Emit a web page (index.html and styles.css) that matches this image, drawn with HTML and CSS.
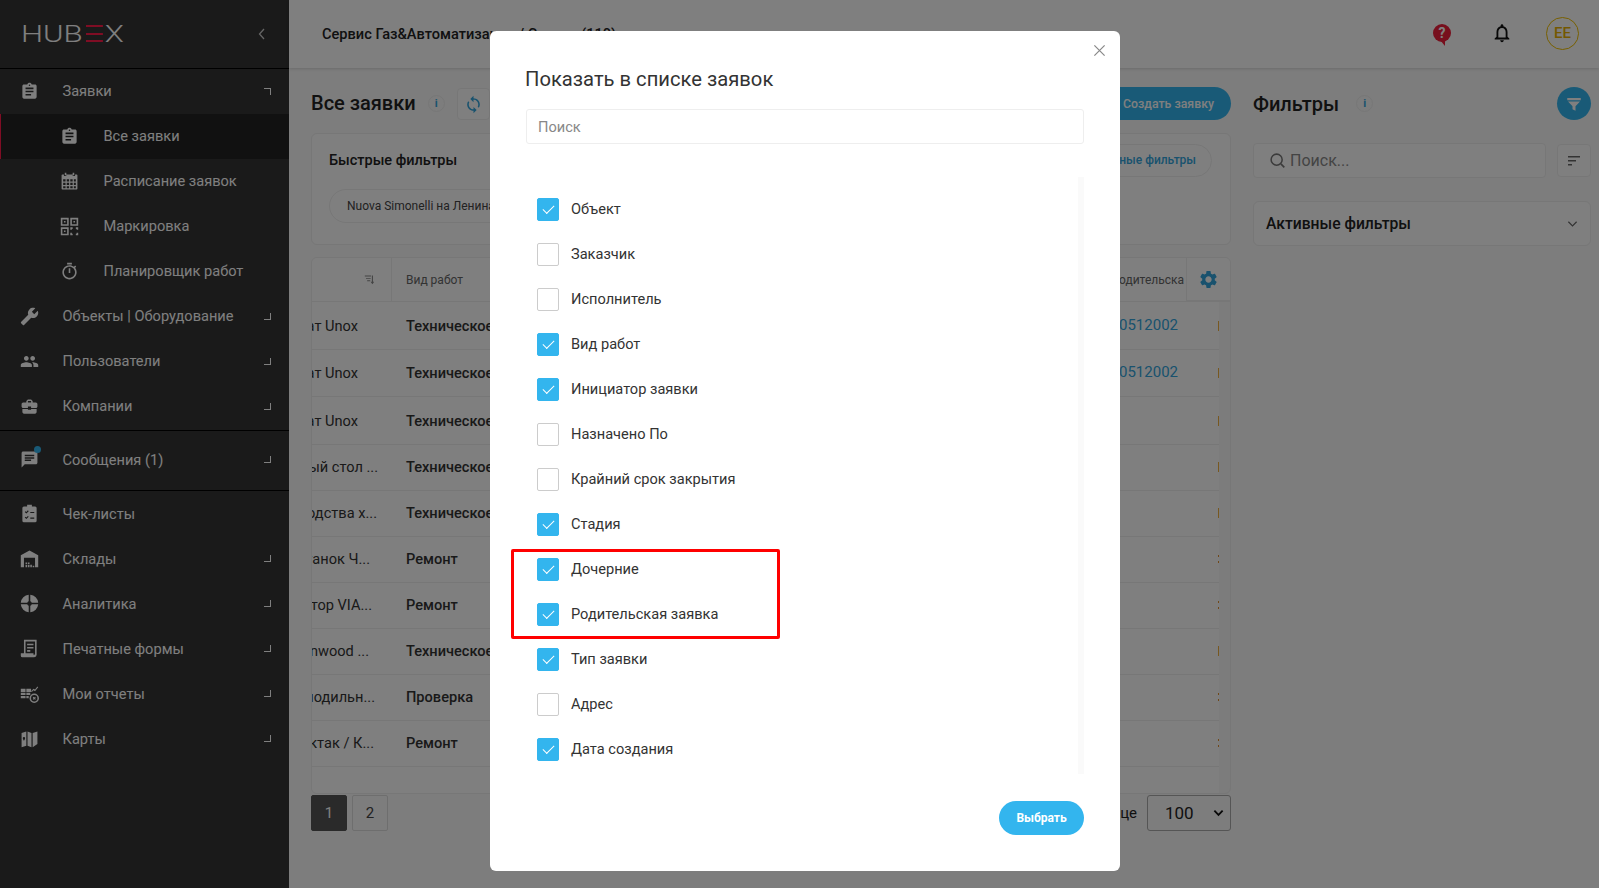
FILE: index.html
```html
<!DOCTYPE html>
<html lang="en">
<head>
  <meta charset="UTF-8">
  <meta name="viewport" content="width=device-width, initial-scale=1.0">
  <title>HubEx</title>
  <link rel="stylesheet" href="styles.css">
</head>
<body>
  <svg class="sprite" xmlns="http://www.w3.org/2000/svg">
    <symbol id="i-assign" viewBox="0 0 24 24"><path d="M19 3h-4.18C14.4 1.84 13.3 1 12 1c-1.3 0-2.4.84-2.82 2H5c-1.1 0-2 .9-2 2v14c0 1.1.9 2 2 2h14c1.1 0 2-.9 2-2V5c0-1.1-.9-2-2-2zm-7 0c.55 0 1 .45 1 1s-.45 1-1 1-1-.45-1-1 .45-1 1-1zm2 14H7v-2h7v2zm3-4H7v-2h10v2zm0-4H7V7h10v2z"/></symbol>
    <symbol id="i-calendar" viewBox="0 0 24 24"><path fill-rule="evenodd" d="M6 1h2v3H6zM16 1h2v3h-2zM3 3h2v2h3V3h8v2h3V3h2a1 1 0 0 1 1 1v17a1 1 0 0 1-1 1H3a1 1 0 0 1-1-1V4a1 1 0 0 1 1-1zm1 6v3h3V9zm4.500 0v3h3V9zm4.500 0v3h3V9zm4.500 0v3H20V9zM4 13.500v3h3v-3zm4.500 0v3h3v-3zm4.500 0v3h3v-3zm4.500 0v3H20v-3zM4 18v2.500h3V18zm4.500 0v2.500h3V18zm4.500 0v2.500h3V18zm4.500 0v2.500H20V18z"/></symbol>
    <symbol id="i-qr" viewBox="0 0 24 24"><path fill-rule="evenodd" d="M1 1h10v10H1zm2 2v6h6V3zm2 2h2v2H5zM13 1h10v10H13zm2 2v6h6V3zm2 2h2v2h-2zM1 13h10v10H1zm2 2v6h6v-6zm2 2h2v2H5zM13 13h3v2h-1v1h-2zM20 13h3v3h-2v-1h-1zM13 20h2v1h1v2h-3zM21 20h2v3h-3v-2h1z"/></symbol>
    <symbol id="i-timer" viewBox="0 0 24 24"><path d="M15 1H9v2h6V1zm-4 13h2V8h-2v6zm8.030-6.610l1.420-1.420c-.43-.51-.9-.99-1.410-1.410l-1.420 1.420C16.070 4.740 14.120 4 12 4c-4.970 0-9 4.030-9 9s4.020 9 9 9 9-4.030 9-9c0-2.120-.74-4.070-1.970-5.610zM12 20c-3.870 0-7-3.130-7-7s3.130-7 7-7 7 3.130 7 7-3.130 7-7 7z"/></symbol>
    <symbol id="i-wrench" viewBox="0 0 24 24"><path transform="translate(24 0) scale(-1 1)" d="M22.700 19l-9.100-9.100c.9-2.300.4-5-1.500-6.900-2-2-5-2.400-7.400-1.300L9 6 6 9 1.600 4.700C.4 7.100.9 10.100 2.900 12.100c1.900 1.900 4.600 2.400 6.900 1.500l9.100 9.100c.4.4 1 .4 1.400 0l2.300-2.300c.5-.4.5-1.100.1-1.400z"/></symbol>
    <symbol id="i-people" viewBox="0 0 24 24"><path d="M16 11c1.660 0 2.990-1.340 2.990-3S17.660 5 16 5c-1.660 0-3 1.340-3 3s1.340 3 3 3zm-8 0c1.660 0 2.990-1.340 2.990-3S9.660 5 8 5C6.340 5 5 6.340 5 8s1.340 3 3 3zm0 2c-2.330 0-7 1.170-7 3.500V19h14v-2.500c0-2.330-4.670-3.500-7-3.500zm8 0c-.29 0-.62.02-.97.05 1.160.84 1.970 1.970 1.970 3.450V19h6v-2.500c0-2.330-4.670-3.500-7-3.500z"/></symbol>
    <symbol id="i-case" viewBox="0 0 24 24"><path d="M10 16v-1H3.010L3 19c0 1.110.89 2 2 2h14c1.110 0 2-.89 2-2v-4h-7v1h-4zm10-9h-4.010V5l-2-2h-4l-2 2v2H4c-1.100 0-2 .9-2 2v3c0 1.110.89 2 2 2h6v-2h4v2h6c1.100 0 2-.9 2-2V9c0-1.100-.9-2-2-2zm-6 0h-4V5h4v2z"/></symbol>
    <symbol id="i-chat" viewBox="0 0 24 24"><path d="M20 2H4c-1.100 0-1.990.9-1.990 2L2 22l4-4h14c1.100 0 2-.9 2-2V4c0-1.100-.9-2-2-2zM6 9h12v2H6V9zm8 5H6v-2h8v2zm4-6H6V6h12v2z"/></symbol>
    <symbol id="i-check" viewBox="0 0 24 24"><path fill-rule="evenodd" d="M9 1h6v2h4a2 2 0 0 1 2 2v16a2 2 0 0 1-2 2H5a2 2 0 0 1-2-2V5a2 2 0 0 1 2-2h4zM6 10l1-1 1 1 2-2 1 1-3 3zm7 0h5v1.500h-5zM6 17l1-1 1 1 2-2 1 1-3 3zm7 0h5v1.500h-5z"/></symbol>
    <symbol id="i-store" viewBox="0 0 24 24"><path fill-rule="evenodd" d="M1 8l11-6 11 6v15H1zM5 11v12h14V11zM10 17h2v2h-2zM7 17h2v2H7zM7 20h2v3H7zM10 20h2v3h-2zM13 20h2v3h-2zM16 21h2v2h-2z"/></symbol>
    <symbol id="i-pie" viewBox="0 0 24 24"><path d="M11 1v8.200A3 3 0 0 0 9.200 11H1A11 11 0 0 1 11 1zM13 1a11 11 0 0 1 10 10h-8.200A3 3 0 0 0 13 9.200zM1 13h8.200A3 3 0 0 0 11 14.800V23A11 11 0 0 1 1 13zM14.800 13H23a11 11 0 0 1-10 10v-8.200a3 3 0 0 0 1.800-1.800z"/></symbol>
    <symbol id="i-form" viewBox="0 0 24 24"><path fill-rule="evenodd" d="M5 1h16v19a3 3 0 0 1-3 3H3a2 2 0 0 1-2-2v-3h4zm2 2v15h10v2h1a1 1 0 0 0 1-1V3zm2 3h8v2H9zm0 4h8v2H9zm0 4h4v2H9z"/></symbol>
    <symbol id="i-report" viewBox="0 0 24 24"><path fill-rule="evenodd" d="M1 6h6v4H1zM8 6h6v4H8zM1 11h6v3H1zM8 11h5v3H8zM1 15h6v3H1zM8 15h3v3H8zM14 9l3-3 2 1 3-4 1 1-4 5-2-1-2 2z"/><path fill-rule="evenodd" d="M18 12a6 6 0 1 1 0 12 6 6 0 0 1 0-12zm0 2a4 4 0 1 0 0 8 4 4 0 0 0 0-8zm-2 3l1-1 1 1 1-1 1 1-1 1 1 1-1 1-1-1-1 1-1-1 1-1z"/></symbol>
    <symbol id="i-map" viewBox="0 0 24 24"><path fill-rule="evenodd" d="M2 5l6-2v18l-6 2zm3 5a1.500 1.500 0 0 0-1.500 1.500C3.500 13 5 15 5 15s1.500-2 1.500-3.500A1.500 1.500 0 0 0 5 10zM9.500 3l5 2v18l-5-2zM16 5l6-2v16l-6 4z"/></symbol>
  </svg>

  <div class="app">
    <aside class="side">
      <div class="side-top">
        <div class="logo"><span>HUB</span><i class="logo-e"><b></b><b></b><b></b></i><span>X</span></div>
        <svg class="collapse" viewBox="0 0 10 14"><path d="M7 2L2.500 7 7 12" fill="none" stroke="currentColor" stroke-width="1.300"/></svg>
      </div>
      <nav class="side-group side-first">
        <a class="nav"><svg class="ico"><use href="#i-assign"/></svg><span>Заявки</span><i class="corner corner-up"></i></a>
        <a class="nav nav-sub nav-on"><svg class="ico"><use href="#i-assign"/></svg><span>Все заявки</span></a>
        <a class="nav nav-sub"><svg class="ico"><use href="#i-calendar"/></svg><span>Расписание заявок</span></a>
        <a class="nav nav-sub"><svg class="ico"><use href="#i-qr"/></svg><span>Маркировка</span></a>
        <a class="nav nav-sub"><svg class="ico"><use href="#i-timer"/></svg><span>Планировщик работ</span></a>
        <a class="nav"><svg class="ico"><use href="#i-wrench"/></svg><span>Объекты | Оборудование</span><i class="corner"></i></a>
        <a class="nav"><svg class="ico"><use href="#i-people"/></svg><span>Пользователи</span><i class="corner"></i></a>
        <a class="nav"><svg class="ico"><use href="#i-case"/></svg><span>Компании</span><i class="corner"></i></a>
      </nav>
      <nav class="side-group side-msg">
        <a class="nav"><span class="ico-wrap"><svg class="ico"><use href="#i-chat"/></svg><i class="dot"></i></span><span>Сообщения (1)</span><i class="corner"></i></a>
      </nav>
      <nav class="side-group">
        <a class="nav"><svg class="ico"><use href="#i-check"/></svg><span>Чек-листы</span></a>
        <a class="nav"><svg class="ico"><use href="#i-store"/></svg><span>Склады</span><i class="corner"></i></a>
        <a class="nav"><svg class="ico"><use href="#i-pie"/></svg><span>Аналитика</span><i class="corner"></i></a>
        <a class="nav"><svg class="ico"><use href="#i-form"/></svg><span>Печатные формы</span><i class="corner"></i></a>
        <a class="nav"><svg class="ico"><use href="#i-report"/></svg><span>Мои отчеты</span><i class="corner"></i></a>
        <a class="nav"><svg class="ico"><use href="#i-map"/></svg><span>Карты</span><i class="corner"></i></a>
      </nav>
    </aside>

    <div class="main">
      <header class="topbar">
        <div class="company">Сервис Газ&amp;Автоматизация / Сервис (110)</div>
        <div class="help"><span>?</span></div>
        <svg class="bell" viewBox="0 0 24 24"><path d="M12 22c1.100 0 2-.9 2-2h-4c0 1.100.9 2 2 2zm6-6v-5c0-3.070-1.630-5.640-4.500-6.320V4c0-.83-.67-1.500-1.500-1.500s-1.500.67-1.500 1.500v.68C7.640 5.360 6 7.920 6 11v5l-2 2v1h16v-1l-2-2zm-2 1H8v-6c0-2.480 1.510-4.500 4-4.500s4 2.020 4 4.500v6z"/></svg>
        <div class="avatar">ЕЕ</div>
      </header>

      <div class="content">
        <section class="left">
          <div class="head">
            <h1>Все заявки</h1>
            <i class="info">i</i>
            <button class="refresh"><svg viewBox="0 0 24 24"><path d="M12 4V1L8 5l4 4V6c3.310 0 6 2.690 6 6 0 1.010-.25 1.970-.7 2.800l1.460 1.460C19.540 15.030 20 13.570 20 12c0-4.420-3.580-8-8-8zm0 14c-3.310 0-6-2.690-6-6 0-1.010.25-1.970.7-2.800L5.240 7.740C4.460 8.970 4 10.430 4 12c0 4.420 3.580 8 8 8v3l4-4-4-4v3z"/></svg></button>
            <button class="create">Создать заявку</button>
          </div>

          <div class="quick">
            <div class="quick-top">
              <h3>Быстрые фильтры</h3>
              <span class="quick-more">Сохраненные фильтры</span>
            </div>
            <span class="chip">Nuova Simonelli на Ленина</span>
          </div>

          <div class="table">
            <div class="thead">
              <div class="c-name"><svg class="sort" viewBox="0 0 14 14"><path d="M1 2h8v1.200H1zM2.500 5h6v1.200h-6zM4 8h4v1.200H4zM10 2h1.400v8H13l-2.300 3-2.300-3H10z"/></svg></div>
              <div class="c-work">Вид работ</div>
              <div class="c-parent">Родительска</div>
              <div class="c-gear"><svg viewBox="0 0 24 24"><path d="M19.140 12.940c.04-.3.06-.61.06-.94 0-.32-.02-.64-.07-.94l2.030-1.580c.18-.14.23-.41.12-.61l-1.920-3.320c-.12-.22-.37-.29-.59-.22l-2.390.96c-.5-.38-1.030-.7-1.620-.94l-.36-2.540c-.04-.24-.24-.41-.48-.41h-3.840c-.24 0-.43.17-.47.41l-.36 2.540c-.59.24-1.130.57-1.620.94l-2.390-.96c-.22-.08-.47 0-.59.22L2.740 8.870c-.12.21-.08.47.12.61l2.030 1.580c-.05.3-.09.63-.09.94s.02.64.07.94l-2.030 1.580c-.18.14-.23.41-.12.61l1.920 3.320c.12.22.37.29.59.22l2.390-.96c.5.38 1.030.7 1.620.94l.36 2.540c.05.24.24.41.48.41h3.840c.24 0 .44-.17.47-.41l.36-2.540c.59-.24 1.130-.56 1.620-.94l2.390.96c.22.08.47 0 .59-.22l1.920-3.320c.12-.22.07-.47-.12-.61l-2.010-1.580zM12 15.600c-1.980 0-3.600-1.620-3.600-3.600s1.620-3.600 3.600-3.600 3.600 1.620 3.600 3.600-1.620 3.600-3.600 3.600z"/></svg></div>
            </div>
            <div class="tbody">
              <div class="row row-tall"><div class="c-name e-a"><span>Пароконвектомат Unox</span></div><div class="c-work">Техническое обслуживание</div><a class="c-parent">20210512002</a><i class="tick"></i></div>
              <div class="row row-tall"><div class="c-name e-a"><span>Пароконвектомат Unox</span></div><div class="c-work">Техническое обслуживание</div><a class="c-parent">20210512002</a><i class="tick"></i></div>
              <div class="row row-tall"><div class="c-name e-a"><span>Пароконвектомат Unox</span></div><div class="c-work">Техническое обслуживание</div><i class="tick"></i></div>
              <div class="row"><div class="c-name e-b"><span>Холодильный стол ...</span></div><div class="c-work">Техническое обслуживание</div><i class="tick"></i></div>
              <div class="row"><div class="c-name e-c"><span>Производства х...</span></div><div class="c-work">Техническое обслуживание</div><i class="tick"></i></div>
              <div class="row"><div class="c-name e-d"><span>Станок Ч...</span></div><div class="c-work">Ремонт</div><i class="tick tick-dots"></i></div>
              <div class="row"><div class="c-name e-e"><span>Мотор VIA...</span></div><div class="c-work">Ремонт</div><i class="tick tick-dots"></i></div>
              <div class="row"><div class="c-name e-f"><span>Kenwood ...</span></div><div class="c-work">Техническое обслуживание</div><i class="tick"></i></div>
              <div class="row"><div class="c-name e-g"><span>Холодильн...</span></div><div class="c-work">Проверка</div><i class="tick tick-dots"></i></div>
              <div class="row"><div class="c-name e-h"><span>Контактак / К...</span></div><div class="c-work">Ремонт</div><i class="tick tick-dots"></i></div>
            </div>
          </div>

          <div class="pager">
            <a class="page page-on">1</a>
            <a class="page">2</a>
            <span class="per-page">Записей на странице</span>
            <div class="select">100<svg viewBox="0 0 12 8"><path d="M1.500 1.500L6 6l4.500-4.500" fill="none" stroke="currentColor" stroke-width="2"/></svg></div>
          </div>
        </section>

        <section class="right">
          <div class="head">
            <h1>Фильтры</h1>
            <i class="info info-far">i</i>
            <button class="funnel"><svg viewBox="0 0 24 24"><path d="M3 4h18v3H3zM4 8.500h16l-6 6.500v6l-4-2v-4z"/></svg></button>
          </div>
          <div class="search-row">
            <div class="search"><svg viewBox="0 0 20 20"><circle cx="9" cy="9" r="6.500" fill="none" stroke="currentColor" stroke-width="1.800"/><path d="M14 14l4 4" stroke="currentColor" stroke-width="2"/></svg>Поиск...</div>
            <button class="sorter"><svg viewBox="0 0 14 12"><path d="M1 1h12v1.500H1zM1 5h8v1.500H1zM1 9h4v1.500H1z"/></svg></button>
          </div>
          <div class="active">
            <span>Активные фильтры</span>
            <svg viewBox="0 0 12 8"><path d="M1.500 1.500L6 6l4.500-4.500" fill="none" stroke="currentColor" stroke-width="1.300"/></svg>
          </div>
        </section>
      </div>
    </div>
  </div>

  <div class="overlay">
    <div class="modal">
      <button class="close"><svg viewBox="0 0 14 14"><path d="M1.500 1.500l11 11M12.500 1.500l-11 11" stroke="currentColor" stroke-width="1.300"/></svg></button>
      <h2>Показать в списке заявок</h2>
      <input class="modal-search" type="text" placeholder="Поиск">
      <div class="list">
        <label class="opt"><input type="checkbox" checked>Объект</label>
        <label class="opt"><input type="checkbox">Заказчик</label>
        <label class="opt"><input type="checkbox">Исполнитель</label>
        <label class="opt"><input type="checkbox" checked>Вид работ</label>
        <label class="opt"><input type="checkbox" checked>Инициатор заявки</label>
        <label class="opt"><input type="checkbox">Назначено По</label>
        <label class="opt"><input type="checkbox">Крайний срок закрытия</label>
        <label class="opt"><input type="checkbox" checked>Стадия</label>
        <label class="opt"><input type="checkbox" checked>Дочерние</label>
        <label class="opt"><input type="checkbox" checked>Родительская заявка</label>
        <label class="opt"><input type="checkbox" checked>Тип заявки</label>
        <label class="opt"><input type="checkbox">Адрес</label>
        <label class="opt"><input type="checkbox" checked>Дата создания</label>
        <div class="mark"></div>
      </div>
      <div class="modal-foot"><button class="pick">Выбрать</button></div>
    </div>
  </div>
</body>
</html>
```

FILE: styles.css
```css
* {
  box-sizing: border-box;
}

body {
  margin: 0;
  height: 888px;
  overflow: hidden;
  font-family: Roboto, "Noto Sans", sans-serif;
  font-size: 14.6px;
  color: #333;
  background: #fafafa;
}

.sprite {
  display: none;
}

.app {
  display: flex;
  height: 888px;
}

/* sidebar */
.side {
  width: 289px;
  flex: none;
  background: #343434;
  color: #fff;
}

.side-top {
  height: 69px;
  display: flex;
  align-items: center;
  justify-content: space-between;
  padding: 0 22px 1px 21px;
  border-bottom: 1px solid #000;
}

.logo {
  display: flex;
  align-items: center;
  gap: 1px;
  font-size: 24px;
  font-weight: 300;
  color: #fff;
  line-height: 1;
  transform: scaleX(1.3);
  transform-origin: left center;
}

.logo-e {
  display: flex;
  flex-direction: column;
  justify-content: space-between;
  width: 13px;
  height: 17px;
  margin-left: 1px;
  margin-right: 1px;
}

.logo-e b {
  display: block;
  height: 2px;
  background: #ff1a48;
}

.collapse {
  width: 10px;
  height: 14px;
  color: #ccc;
}

.side-group {
  border-bottom: 1px solid #000;
}

.side-group:last-child {
  border-bottom: none;
}

.side-first {
  padding-bottom: 1px;
}

.side-first .nav > span {
  margin-bottom: 2px;
}

.side-msg {
  padding: 6px 0 8px;
}

.nav {
  display: flex;
  align-items: center;
  height: 45px;
  padding-left: 20px;
  padding-right: 18px;
}

.nav > span:not(.ico-wrap) {
  flex: 1;
}

.nav .ico,
.ico-wrap {
  flex: none;
}

.ico {
  width: 19px;
  height: 19px;
  fill: #fff;
  margin-right: 23.5px;
}

.ico-wrap {
  position: relative;
  display: block;
  height: 19px;
}

.dot {
  position: absolute;
  top: -4px;
  left: 14px;
  width: 7px;
  height: 7px;
  border-radius: 50%;
  background: #33b5ee;
}

.nav-sub {
  padding-left: 60px;
}

.nav-sub .ico {
  margin-right: 24.5px;
}

.nav-on {
  background: #222;
  border-left: 1px solid #ff1a48;
  padding-left: 59px;
}

.corner {
  width: 7px;
  height: 7px;
  border-right: 1px solid #fff;
  border-bottom: 1px solid #fff;
}

.corner-up {
  border-bottom: none;
  border-top: 1px solid #fff;
}

/* top bar */
.main {
  flex: 1;
  min-width: 0;
  display: flex;
  flex-direction: column;
}

.topbar {
  height: 68px;
  flex: none;
  display: flex;
  align-items: center;
  padding: 0 20px 2px 33px;
  background: #fff;
  box-shadow: 0 1px 3px rgba(0, 0, 0, 0.15);
}

.company {
  flex: 1;
  padding-top: 2px;
  font-weight: 500;
  color: #222;
}

.help {
  position: relative;
  width: 18px;
  height: 18px;
  margin-right: 40px;
  border-radius: 50%;
  background: #ee1f3a;
  color: #fff;
  font-size: 14px;
  font-weight: 700;
  line-height: 18px;
  text-align: center;
}

.help::after {
  content: "";
  position: absolute;
  left: 7px;
  bottom: -4px;
  border-left: 5px solid transparent;
  border-top: 6px solid #ee1f3a;
}

.bell {
  width: 22px;
  height: 22px;
  margin-right: 33px;
  fill: #111;
}

.avatar {
  width: 33px;
  height: 33px;
  border: 1px solid #f0c000;
  border-radius: 50%;
  font-size: 15px;
  font-weight: 500;
  line-height: 31px;
  text-align: center;
  color: #e8b000;
}

/* content */
.content {
  display: flex;
  gap: 22px;
  padding: 19px 8px 0 22px;
}

.left {
  width: 920px;
  flex: none;
}

.right {
  flex: 1;
  min-width: 0;
}

.head {
  display: flex;
  align-items: center;
  height: 33px;
}

h1 {
  margin: 0;
  font-size: 20px;
  font-weight: 500;
  color: #222;
}

.left h1 {
  margin-bottom: 2px;
}

.info {
  width: 17px;
  height: 17px;
  margin-left: 12px;
  border: 1px solid #eee;
  border-radius: 50%;
  font-size: 11px;
  font-style: normal;
  font-weight: 700;
  line-height: 15px;
  text-align: center;
  color: #33a5dc;
}

.info-far {
  margin-left: 17px;
}

.refresh {
  width: 33px;
  height: 32px;
  margin-left: 12px;
  padding: 6px;
  background: #fff;
  border: 1px solid #eee;
  border-radius: 4px;
}

.refresh svg {
  fill: #33a5dc;
}

.create {
  margin-left: auto;
  width: 180px;
  height: 33px;
  padding-right: 17px;
  border: none;
  border-radius: 17px;
  background: #33b5ee;
  color: #fff;
  font: 500 12.3px Roboto, sans-serif;
  text-align: right;
}

.quick {
  height: 112px;
  margin-top: 13px;
  padding: 10px 18px 10px 17px;
  background: #fff;
  border: 1px solid #eee;
  border-radius: 6px;
}

.quick-top {
  display: flex;
  align-items: center;
  justify-content: space-between;
}

h3 {
  margin: 0;
  font-size: 14.5px;
  font-weight: 500;
  color: #222;
}

.quick-more {
  height: 33px;
  padding: 0 15px 0 17px;
  border: 1px solid #eee;
  border-radius: 17px;
  color: #33a5dc;
  font-size: 12px;
  font-weight: 500;
  line-height: 31px;
}

.chip {
  display: inline-block;
  height: 34px;
  margin-top: 12px;
  padding: 0 17px;
  border: 1px solid #eee;
  border-radius: 17px;
  font-size: 12px;
  line-height: 32px;
  color: #444;
}

.table {
  display: flex;
  flex-direction: column;
  height: 537px;
  margin-top: 12px;
  background: #f9f9f9;
  border: 1px solid #eee;
  border-radius: 6px;
  overflow: hidden;
}

.thead {
  display: flex;
  align-items: center;
  height: 44px;
  flex: none;
  background: #fff;
  border-bottom: 1px solid #eee;
  font-size: 12px;
  color: #666;
}

.thead .c-name {
  align-self: stretch;
  align-items: center;
  padding-right: 16px;
  border-right: 1px solid #eee;
}

.sort {
  width: 11px;
  height: 11px;
  fill: #888;
}

.c-name {
  display: flex;
  justify-content: flex-end;
  width: 80px;
  flex: none;
  overflow: hidden;
  white-space: nowrap;
}

.c-name span {
  flex: none;
}

.c-work {
  flex: 1;
  min-width: 0;
  padding-left: 14px;
  font-weight: 500;
  white-space: nowrap;
  overflow: hidden;
}

.thead .c-work {
  font-weight: 400;
}

.c-parent {
  width: 100px;
  flex: none;
  text-align: right;
  white-space: nowrap;
  overflow: hidden;
}

.thead .c-parent {
  width: 65px;
  text-align: left;
  direction: rtl;
}

.row .c-parent {
  margin-right: 40px;
  margin-bottom: 2px;
  font-size: 15px;
  color: #33a5dc;
}

.c-gear {
  width: 44px;
  flex: none;
  align-self: stretch;
  padding: 11px;
  margin-left: 2px;
  border-left: 1px solid #eee;
  border-bottom: 1px solid #eee;
}

.c-gear svg {
  display: block;
  fill: #33a5dc;
}

.tbody {
  flex: 1;
  margin-right: 11px;
  background: #fff;
}

.row {
  display: flex;
  align-items: center;
  height: 46px;
  border-bottom: 1px solid #eee;
  color: #333;
}

.row-tall {
  height: 47.67px;
  padding-top: 1px;
}

.e-a {
  padding-right: 34px;
}

.e-b {
  padding-right: 14px;
}

.e-c {
  padding-right: 15px;
}

.e-d {
  padding-right: 22px;
}

.e-e {
  padding-right: 20px;
}

.e-f {
  padding-right: 23px;
}

.e-g {
  padding-right: 17px;
}

.e-h {
  padding-right: 18px;
}

.tick {
  width: 1px;
  height: 10px;
  margin-left: auto;
  background: #f0b040;
}

.c-parent + .tick {
  margin-left: 0;
}

.tick-dots {
  height: 8px;
  background: repeating-linear-gradient(#e09030 0 2px, transparent 2px 6px);
}

.pager {
  display: flex;
  align-items: center;
  margin-top: 1px;
  height: 36px;
  gap: 5px;
}

.page {
  width: 36px;
  height: 36px;
  border: 1px solid #ddd;
  border-radius: 2px;
  font-size: 15px;
  line-height: 34px;
  text-align: center;
  color: #444;
}

.page-on {
  background: #555;
  border-color: #555;
  color: #fff;
}

.per-page {
  margin-left: auto;
  margin-right: 5px;
  font-size: 15px;
  color: #222;
}

.select {
  display: flex;
  align-items: center;
  justify-content: space-between;
  align-self: flex-start;
  width: 84px;
  height: 36px;
  padding: 0 6px 0 17px;
  border: 1px solid #aaa;
  border-radius: 3px;
  font-size: 17px;
  color: #222;
}

.select svg {
  width: 11px;
  height: 8px;
  color: #111;
}

.funnel {
  width: 34px;
  height: 33px;
  margin-left: auto;
  padding: 8px;
  border: none;
  border-radius: 50%;
  background: #33b5ee;
}

.funnel svg {
  display: block;
  fill: #fff;
}

.search-row {
  display: flex;
  align-items: center;
  gap: 11px;
  margin-top: 23px;
}

.search {
  display: flex;
  align-items: center;
  flex: 1;
  height: 35px;
  padding-left: 15px;
  background: #fff;
  border: 1px solid #eee;
  border-radius: 4px;
  font-size: 16px;
  color: #888;
}

.search svg {
  width: 17px;
  height: 17px;
  margin-right: 4px;
  color: #777;
}

.sorter {
  width: 34px;
  height: 33px;
  flex: none;
  padding: 0 9px;
  background: #fff;
  border: 1px solid #eee;
  border-radius: 4px;
}

.sorter svg {
  display: block;
  fill: #666;
}

.active {
  display: flex;
  align-items: center;
  justify-content: space-between;
  height: 45px;
  margin-top: 23px;
  padding: 0 12px;
  background: #fff;
  border: 1px solid #eee;
  border-radius: 6px;
  font-size: 15.7px;
  font-weight: 500;
  color: #222;
}

.active svg {
  width: 11px;
  height: 8px;
  color: #666;
}

/* modal */
.overlay {
  position: fixed;
  inset: 0;
  padding: 31px 0 0 490px;
  background: rgba(0, 0, 0, 0.5);
}

.modal {
  position: relative;
  display: flex;
  flex-direction: column;
  width: 630px;
  height: 840px;
  padding: 36px 36px 36px 36px;
  background: #fff;
  border-radius: 6px;
}

.close {
  position: absolute;
  top: 13px;
  right: 14px;
  width: 13px;
  height: 13px;
  padding: 0;
  background: none;
  border: none;
  color: #888;
}

.close svg {
  display: block;
}

h2 {
  margin: 0 0 0 -1px;
  height: 24px;
  font-size: 20.2px;
  font-weight: 400;
  line-height: 24px;
  color: #333;
}

.modal-search {
  height: 35px;
  margin-top: 18px;
  padding: 0 11px;
  border: 1px solid #eee;
  border-radius: 3px;
  font: 14.6px Roboto, sans-serif;
  outline: none;
}

.modal-search::placeholder {
  color: #888;
}

.list {
  position: relative;
  height: 597px;
  margin-top: 33px;
  padding-top: 10px;
  border-right: 6px solid #fafafa;
}

.opt {
  display: flex;
  align-items: center;
  gap: 12px;
  height: 45px;
  padding-left: 11px;
  padding-bottom: 2px;
}

.opt input {
  appearance: none;
  position: relative;
  width: 22px;
  height: 23px;
  margin: 2px 0 0;
  background: #fff;
  border: 1px solid #ccc;
  border-radius: 2px;
}

.opt input:checked {
  background: #33b5ee;
  border-color: #33b5ee;
}

.opt input:checked::after {
  content: "";
  position: absolute;
  left: 5px;
  top: 6px;
  width: 10px;
  height: 5px;
  border-left: 1.300px solid #fff;
  border-bottom: 1.300px solid #fff;
  transform: rotate(-45deg);
}

.mark {
  position: absolute;
  left: -15px;
  top: 372px;
  width: 269px;
  height: 90px;
  border: 3px solid #f00;
  border-radius: 2px;
  pointer-events: none;
}

.modal-foot {
  display: flex;
  justify-content: flex-end;
  margin-top: 27px;
}

.pick {
  width: 85px;
  height: 34px;
  border: none;
  border-radius: 17px;
  background: #33b5ee;
  color: #fff;
  font: 700 12px Roboto, sans-serif;
}
```
